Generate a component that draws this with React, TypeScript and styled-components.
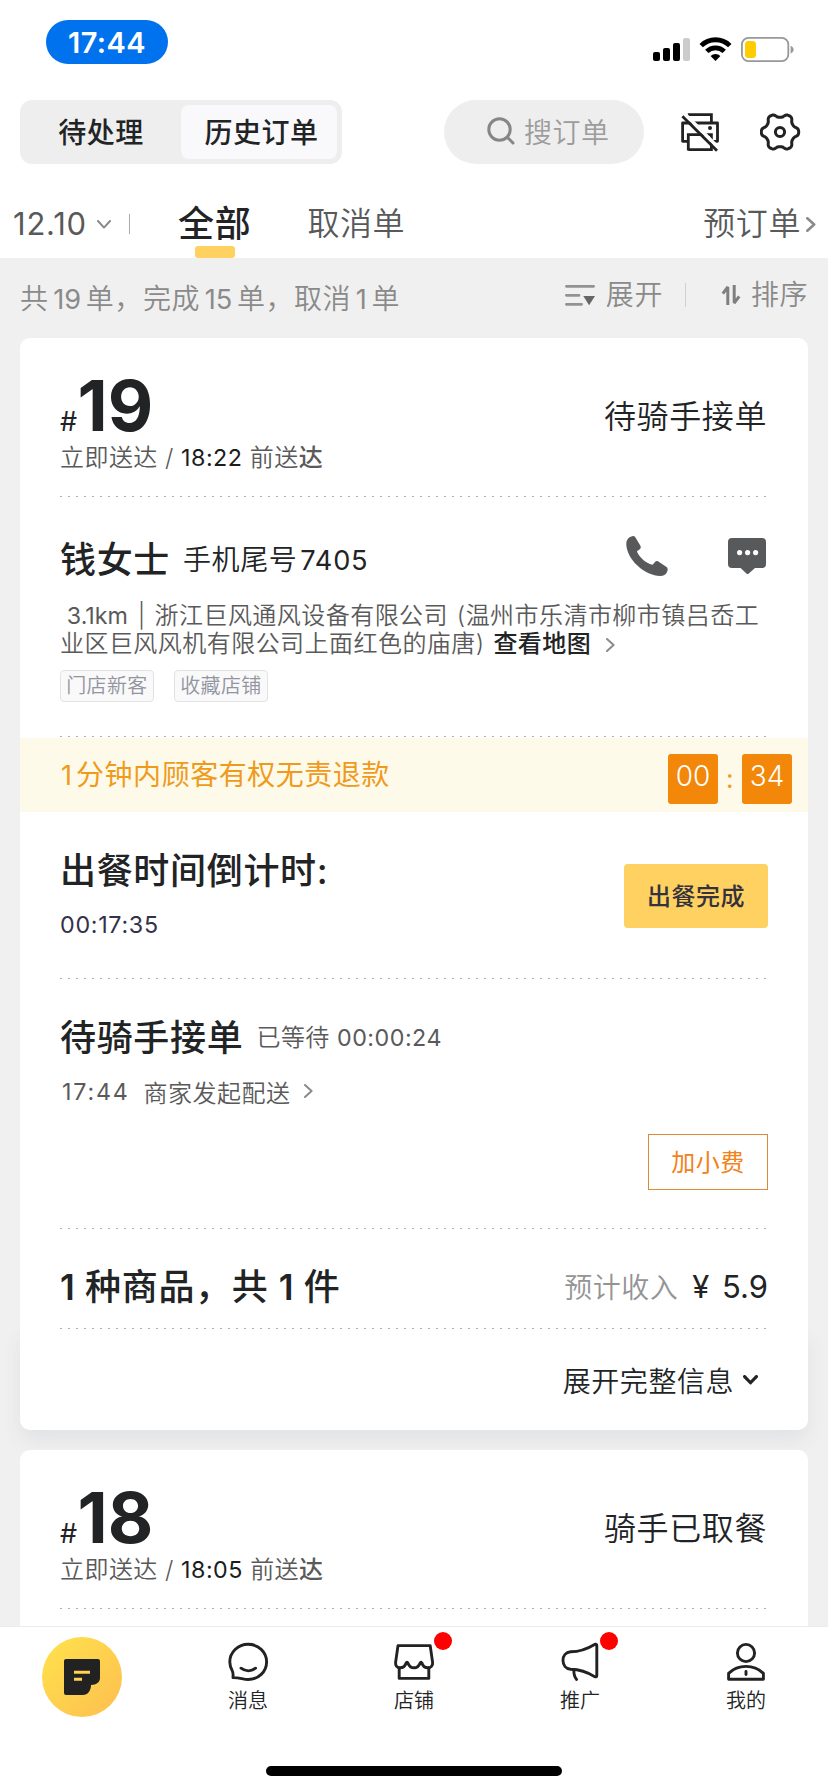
import React from "react";
import styled, { createGlobalStyle } from "styled-components";

const GlobalStyle = createGlobalStyle`
  * { box-sizing: border-box; letter-spacing: 0.019em; }
  html, body { margin: 0; padding: 0; background: #fff; }
  body {
    font-family: Inter, "Noto Sans CJK SC", sans-serif;
    color: #222325;
    white-space: nowrap;
  }
  svg { display: block; flex: none; }
`;

const Screen = styled.div`
  width: 828px;
  height: 1792px;
  display: flex;
  flex-direction: column;
  overflow: hidden;
  background: #fff;
`;

/* Latin digits set a touch smaller than the surrounding CJK text */
const Num = styled.span<{ $track?: number; $gap?: number; $weight?: number }>`
  font-size: 0.97em;
  font-weight: ${(p) => p.$weight ?? 400};
  letter-spacing: ${(p) => p.$track ?? 0}px;
  margin: 0 ${(p) => p.$gap ?? 0}px;
`;

/* ---------- status bar ---------- */
const StatusBar = styled.div`
  height: 100px;
  flex: none;
  display: flex;
  justify-content: space-between;
  padding: 20px 33px 0 46px;
`;
const TimePill = styled.div`
  width: 122px;
  height: 44px;
  border-radius: 22px;
  background: #0072ee;
  color: #fff;
  font-size: 29px;
  font-weight: 560;
  line-height: 45px;
  text-align: center;
  letter-spacing: 0.4px;
`;
const StatusIcons = styled.div`
  display: flex;
  gap: 9px;
  padding-top: 16px;
`;

/* ---------- top bar ---------- */
const TopBar = styled.div`
  height: 64px;
  flex: none;
  display: flex;
  align-items: center;
  padding: 0 24px 0 20px;
`;
const Segmented = styled.div`
  width: 322px;
  height: 64px;
  padding: 5px;
  display: flex;
  border-radius: 12px;
  background: #eee;
`;
const Segment = styled.div<{ $active?: boolean }>`
  flex: ${(p) => (p.$active ? "0 0 156px" : "1")};
  display: flex;
  align-items: center;
  justify-content: center;
  padding: ${(p) => (p.$active ? "0 0 2px 5px" : "0 4px 2px 0")};
  border-radius: 8px;
  background: ${(p) => (p.$active ? "#f9f9fb" : "transparent")};
  font-size: 28px;
  font-weight: 500;
`;
const SearchBox = styled.div`
  width: 200px;
  height: 64px;
  margin: 0 36px 0 102px;
  padding: 0 0 2px 43px;
  display: flex;
  align-items: center;
  gap: 9px;
  border-radius: 32px;
  background: #eee;
  color: #9c9c9c;
  font-size: 28px;
  font-weight: 350;
`;
const TopActions = styled.div`
  display: flex;
  gap: 40px;
`;

/* ---------- filter tabs ---------- */
const FilterBar = styled.div`
  height: 94px;
  flex: none;
  display: flex;
  padding: 30px 12px 0 12px;
  line-height: 60px;
  color: #595959;
`;
const DatePicker = styled.div`
  width: 118px;
  height: 60px;
  display: flex;
  align-items: center;
  justify-content: space-between;
  font-size: 31px;
  padding: 0 19px 0 1px;
  letter-spacing: 0.8px;
`;
const FilterRule = styled.i`
  width: 1px;
  height: 20px;
  margin: 20px 0 0 -1px;
  background: #aaa;
`;
const FilterTab = styled.div<{ $active?: boolean; $left: number }>`
  margin-left: ${(p) => p.$left}px;
  height: 64px;
  display: flex;
  flex-direction: column;
  align-items: center;
  font-size: ${(p) => (p.$active ? 36 : 32)}px;
  font-weight: ${(p) => (p.$active ? 500 : 350)};
  color: ${(p) => (p.$active ? "#222325" : "#595959")};
`;
const TabMarker = styled.i`
  width: 40px;
  height: 12px;
  flex: none;
  margin-top: -8px;
  border-radius: 3px;
  background: #ffd161;
`;
const Preorder = styled.div`
  margin-left: auto;
  height: 60px;
  display: flex;
  align-items: center;
  gap: 5px;
  font-size: 32px;
  font-weight: 350;
`;

/* ---------- order list ---------- */
const OrderList = styled.main`
  flex: 1;
  min-height: 0;
  overflow: hidden;
  display: flex;
  flex-direction: column;
  background: #f0f0f0;
`;
const Summary = styled.div`
  height: 80px;
  flex: none;
  display: flex;
  padding: 0 20px;
  font-size: 28px;
  font-weight: 350;
  color: #8a8a8a;
  line-height: 82px;
`;
const SummaryTools = styled.div`
  margin-left: auto;
  height: 74px;
  display: flex;
  align-items: center;
  line-height: 74px;
`;
const ToolLabel = styled.span`
  margin-left: 10px;
`;
const ToolRule = styled.i`
  width: 1px;
  height: 24px;
  background: #d0d0d0;
  margin: 0 35px 0 22px;
`;

const Card = styled.article`
  width: 788px;
  min-height: 300px;
  margin: 0 20px 20px;
  flex: none;
  border-radius: 10px;
  background: #fff;
`;
const Divider = styled.div`
  height: 1px;
  margin: 0 40px;
  background: repeating-linear-gradient(90deg, #adadad 0 2px, transparent 2px 8px);
`;
const CardHead = styled.header`
  height: 158px;
  padding: 32px 41px 0 40px;
  display: flex;
  justify-content: space-between;
`;
const OrderNo = styled.div`
  height: 74px;
  display: flex;
  align-items: baseline;
  line-height: 72px;
  font-size: 70px;
  font-weight: 700;
  letter-spacing: 0;
`;
const Hash = styled.span`
  font-size: 27px;
  font-weight: 400;
  letter-spacing: 0.4px;
`;
const Deliver = styled.div`
  font-size: 24px;
  font-weight: 350;
  color: #5a5a5a;
  line-height: 28px;
  b { font-weight: 400; color: #1c1c1e; }
  em { font-style: normal; font-weight: 500; }
`;
const OrderStatus = styled.div`
  padding-top: 17px;
  line-height: 60px;
  font-size: 32px;
  font-weight: 350;
`;

const Customer = styled.section`
  height: 239px;
  padding: 30px 40px 0;
`;
const CustomerRow = styled.div`
  height: 60px;
  display: flex;
  align-items: center;
`;
const Name = styled.h2`
  margin: 0;
  font-size: 36px;
  font-weight: 500;
`;
const PhoneTail = styled.span`
  margin-left: 13px;
  padding-top: 1px;
  font-size: 28px;
  font-weight: 350;
  flex: 1;
`;
const ContactIcons = styled.div`
  display: flex;
  align-items: center;
  gap: 58px;
  margin-right: 1px;
  padding-bottom: 2px;
`;
const Address = styled.p`
  margin: 15px 0 12px;
  font-size: 24px;
  font-weight: 350;
  line-height: 28px;
  color: #5a5a5a;
  white-space: pre;
  word-spacing: 1.6px;
  b { font-weight: 500; color: #222325; }
  svg { display: inline-block; margin-left: 15px; }
`;
const Distance = styled(Num)`
  margin: 0 1px 0 -2px;
`;
const Tags = styled.div`
  display: flex;
  gap: 20px;
`;
const Tag = styled.span`
  width: 94px;
  height: 32px;
  border: 1px solid #e2e2e4;
  border-radius: 4px;
  background: #f9f9fa;
  color: #9294a0;
  font-size: 20px;
  font-weight: 350;
  line-height: 30px;
  text-align: center;
`;

const RefundStrip = styled.section`
  height: 74px;
  margin-top: 1px;
  padding: 0 16px 0 40px;
  display: flex;
  align-items: center;
  justify-content: space-between;
  background: #fdfaea;
  color: #f09a1c;
  font-size: 28px;
  line-height: 76px;
`;
const Timer = styled.div`
  display: flex;
  align-items: center;
  padding-top: 8px;
`;
const TimerBox = styled.span`
  width: 50px;
  height: 50px;
  border-radius: 3px;
  background: #f28709;
  color: #fff;
  font-size: 28px;
  font-weight: 350;
  line-height: 44px;
  text-align: center;
  letter-spacing: 0;
`;
const TimerColon = styled.span`
  width: 24px;
  text-align: center;
  font-size: 26px;
  line-height: 50px;
`;

const Prep = styled.section`
  height: 166px;
  padding: 0 40px;
  display: flex;
  justify-content: space-between;
`;
const Title = styled.h3`
  margin: 0;
  font-size: 36px;
  font-weight: 500;
  line-height: 60px;
`;
const PrepInfo = styled.div`
  padding-top: 29px;
`;
const Countdown = styled.div`
  font-size: 24px;
  line-height: 48px;
  color: #34324a;
`;
const DoneButton = styled.button`
  width: 144px;
  height: 64px;
  margin-top: 52px;
  padding: 0 0 3px;
  border: 0;
  border-radius: 4px;
  background: #ffd161;
  color: #34323c;
  font: inherit;
  font-size: 24px;
  font-weight: 500;
`;

const Rider = styled.section`
  height: 249px;
  padding: 29px 40px 0;
  display: flex;
  flex-direction: column;
`;
const RiderRow = styled.div`
  display: flex;
  align-items: center;
  line-height: 60px;
`;
const Waited = styled.span`
  margin-left: 13px;
  font-size: 24px;
  font-weight: 350;
  color: #5a5a5a;
`;
const RiderLog = styled.div`
  height: 46px;
  display: flex;
  align-items: center;
  gap: 14px;
  padding-left: 2px;
  font-size: 24px;
  font-weight: 350;
  color: #5a5a5a;
`;
const TipButton = styled.button`
  align-self: flex-end;
  width: 120px;
  height: 56px;
  margin-top: 20px;
  padding: 0 0 3px;
  border: 1px solid #dc8a33;
  background: #fff;
  color: #f2821a;
  font: inherit;
  font-size: 24px;
`;

const Goods = styled.section`
  height: 99px;
  padding: 18px 40px 0;
  display: flex;
  justify-content: space-between;
  line-height: 80px;
  ${Title} { line-height: 80px; }
`;
const Income = styled.div`
  font-size: 28px;
  font-weight: 350;
  color: #949494;
  b {
    margin-left: 14px;
    font-size: 31px;
    font-weight: 400;
    letter-spacing: 0;
    color: #222325;
    word-spacing: 4px;
  }
`;
const Expand = styled.footer`
  height: 101px;
  padding: 0 50px 0 0;
  display: flex;
  align-items: center;
  justify-content: flex-end;
  gap: 9px;
  border-radius: 0 0 10px 10px;
  font-size: 28px;
  font-weight: 350;
  box-shadow: 0 10px 20px rgba(70, 72, 100, 0.08);
  clip-path: inset(0 -20px -20px -20px);
`;

/* ---------- bottom navigation ---------- */
const NavBar = styled.nav`
  height: 166px;
  flex: none;
  border-top: 1px solid #ebebeb;
  background: #fff;
  display: flex;
  flex-direction: column;
  justify-content: space-between;
  align-items: center;
  padding-bottom: 16px;
`;
const NavItems = styled.div`
  width: 830px;
  display: flex;
`;
const NavItem = styled.div`
  position: relative;
  flex: 1;
  display: flex;
  flex-direction: column;
  align-items: center;
  padding-top: 13px;
  font-size: 20px;
  font-weight: 350;
  line-height: 34px;
  letter-spacing: 0;
`;
const NavHome = styled(NavItem)`
  padding-top: 10px;
`;
const HomeDisc = styled.div`
  width: 80px;
  height: 80px;
  border-radius: 40px;
  display: flex;
  align-items: center;
  justify-content: center;
  background: linear-gradient(135deg, #ffdf4d 10%, #fdc24f 90%);
`;
const NavDot = styled.i`
  position: absolute;
  top: 5px;
  left: calc(50% + 20px);
  width: 18px;
  height: 18px;
  border-radius: 9px;
  background: #fe0000;
`;
const HomeIndicator = styled.div`
  width: 296px;
  height: 10px;
  border-radius: 5px;
  background: #000;
`;

/* ---------- icons ---------- */
const Chevron = ({ dir = "right", w, h, stroke = 2.4, color = "#8a8a8e" }: {
  dir?: "right" | "down"; w: number; h: number; stroke?: number; color?: string;
}) => {
  const m = stroke / 2;
  const d = dir === "right"
    ? `M${m} ${m}L${w - m * 1.4} ${h / 2}L${m} ${h - m}`
    : `M${m} ${m}L${w / 2} ${h - m * 1.4}L${w - m} ${m}`;
  return (
    <svg width={w} height={h} fill="none" stroke={color} strokeWidth={stroke} strokeLinecap="round" strokeLinejoin="round">
      <path d={d} />
    </svg>
  );
};

const SignalIcon = () => (
  <svg width="37" height="26">
    <rect x="0" y="16" width="7" height="9" rx="2" />
    <rect x="10" y="12" width="7" height="13" rx="2" />
    <rect x="20" y="7" width="7" height="18" rx="2" />
    <rect x="30" y="2" width="7" height="23" rx="2" fill="#ccc" />
  </svg>
);

const WifiIcon = () => (
  <svg width="33" height="26" fill="none" stroke="#000" strokeWidth="4.8">
    <path d="M2.2 9.6A20.4 20.4 0 0 1 30.8 9.6" />
    <path d="M7.8 15.4A12.3 12.3 0 0 1 25.2 15.4" />
    <path d="M16.5 25L11.6 20.1A7 7 0 0 1 21.4 20.1Z" fill="#000" stroke="none" />
  </svg>
);

const BatteryIcon = () => (
  <svg width="54" height="26">
    <rect x="0.9" y="1.9" width="46.4" height="23.2" rx="6.5" fill="none" stroke="#98989a" strokeWidth="1.8" />
    <rect x="4" y="5" width="11" height="17" rx="3.5" fill="#ffcc00" />
    <path d="M49.6 9.8C53.6 11.4 53.6 16 49.6 17.4Z" fill="#98989a" />
  </svg>
);

const SearchIcon = () => (
  <svg width="28" height="28" fill="none" stroke="#868686" strokeWidth="3" strokeLinecap="round">
    <circle cx="12.5" cy="12.5" r="10.7" />
    <path d="M20.5 20.5L26 26" />
  </svg>
);

const PrinterOffIcon = () => (
  <svg width="40" height="40" fill="none" stroke="#222" strokeWidth="2.8">
    <path d="M8.3 29.3H2.6V11H37.5V29.3H32" strokeLinejoin="round" />
    <path d="M7.8 2.6H31.4V11" />
    <path d="M8.3 38.6V22.6H31.4V37.6H8.3" />
    <circle cx="30" cy="16" r="2" fill="#222" stroke="none" />
    <path d="M4.6 1.8L39 36.2" stroke="#fff" strokeWidth="3.6" />
    <path d="M2.4 4.2L37 38.8" />
  </svg>
);

/* six-toothed cog outline sampled from a flattened cosine */
const cogPath = (() => {
  const pts: string[] = [];
  for (let a = 0; a < 360; a += 3) {
    const t = (a * Math.PI) / 180;
    const r = 16.7 + (2 * Math.tanh(1.5 * Math.cos(6 * t))) / Math.tanh(1.5);
    pts.push(`${(20 + r * Math.cos(t)).toFixed(2)} ${(20 + r * Math.sin(t)).toFixed(2)}`);
  }
  return `M${pts.join("L")}Z`;
})();
const CogIcon = () => (
  <svg width="42" height="40" fill="none" stroke="#222" strokeWidth="3" strokeLinejoin="round">
    <path d={cogPath} />
    <circle cx="20" cy="20" r="4.6" />
  </svg>
);

const ExpandIcon = () => (
  <svg width="32" height="24" stroke="#929292" strokeWidth="2.8" strokeLinecap="round">
    <path d="M2.4 3.3H29.6M2.4 12.3H15M2.4 21.3H17.6" />
    <path d="M19.3 13H31L25.1 22.3Z" fill="#666" stroke="none" />
  </svg>
);

const SortIcon = () => (
  <svg width="20" height="22" fill="none" stroke="#7f7f7f" strokeWidth="3">
    <path d="M6.8 21V3L1.8 9.6" strokeLinejoin="bevel" />
    <path d="M13.2 1V19L18.2 12.4" strokeLinejoin="bevel" />
  </svg>
);

const PhoneIcon = () => (
  <svg width="44" height="44" fill="#58595b">
    <path d="M8 2C9.2 1.8 10 2.6 10.6 3.7L15.4 11.8C16.1 13.2 15.8 14.4 14.8 15.2L11.9 17.3C12.6 19.6 15 23.2 18.6 26.2C21.8 28.9 25 30.3 27.6 30.8L30 28C30.9 27 32.1 26.8 33.3 27.6L41.2 32.8C42.6 33.8 43 35.2 42.4 37C41.4 40.4 39 42 35 42C28 41.8 19.4 38.4 12.4 31.6C5.6 25 1.6 17.4 1.3 10.4C1.2 6 3.6 2.8 8 2Z" />
  </svg>
);

const BubbleIcon = () => (
  <svg width="40" height="40">
    <path d="M5 2H35A4 4 0 0 1 39 6V28A4 4 0 0 1 35 32H28L21.8 37.4Q20.6 38.6 19.4 37.4L13.6 32H5A4 4 0 0 1 1 28V6A4 4 0 0 1 5 2Z" fill="#58595b" />
    <circle cx="12.6" cy="16.6" r="2.6" fill="#fff" />
    <circle cx="20.6" cy="16.6" r="2.6" fill="#fff" />
    <circle cx="28.6" cy="16.6" r="2.6" fill="#fff" />
  </svg>
);

const NoteIcon = () => (
  <svg width="36" height="36">
    <path d="M2 0H34A2 2 0 0 1 36 2V19C36 23 32.5 26 27 26C27 32 23.5 36 19 36H2A2 2 0 0 1 0 34V2A2 2 0 0 1 2 0Z" fill="#222" />
    <path d="M10 13.3H26M10 20.3H18" stroke="#ffd255" strokeWidth="3" />
  </svg>
);

const NavIcon = styled.svg.attrs({ width: 44, height: 44, fill: "none", stroke: "#222", strokeWidth: 2.9 })`
  stroke-linejoin: round;
  stroke-linecap: round;
`;

const MessageIcon = () => (
  <NavIcon>
    <path d="M7 37.6C7.3 34.4 7.2 32.4 6.2 30.6C4.7 27.8 3.8 25.2 3.8 22A18.4 17.6 0 1 1 22.2 39.5C17 39.5 13.6 37.4 7 37.6Z" />
    <path d="M15 28.2C19.4 31.6 25.2 31.6 29.6 28.2" />
  </NavIcon>
);
const ShopIcon = () => (
  <NavIcon>
    <path d="M6 5.6H38.2L40.6 22.4C41 25.8 38.8 27.8 36 27.8C32.6 27.8 31 26.4 30 23.2Q29 21.4 28 23.2C26.8 26.4 25 27.8 22 27.8C19 27.8 17.2 26.4 16 23.2Q15 21.4 14 23.2C13 26.4 11.4 27.8 8 27.8C5.2 27.8 3.2 25.8 3.6 22.4Z" />
    <path d="M7.2 28V38.4H36.8V28" />
  </NavIcon>
);
const PromoIcon = () => (
  <NavIcon>
    <path d="M12.6 11.8C22 11.6 30 8.4 36.6 4.4Q38.8 3.6 38.8 5.6V35.4Q38.8 37.6 36.6 36.6C30 32.4 22 29.4 12.6 29.2C8 28.8 5 25.2 5 20.5C5 15.8 8 12.2 12.6 11.8Z" />
    <path d="M15.8 30C15.8 34 16.4 37 18.6 39.4" />
  </NavIcon>
);
const MineIcon = () => (
  <NavIcon>
    <circle cx="22" cy="13" r="8.6" />
    <path d="M4.6 39.2V33.4C9.6 28.4 15.4 26.4 22 26.4C28.6 26.4 34.4 28.4 39.4 33.4V39.2Z" />
    <path d="M22 31.4V34.6" />
  </NavIcon>
);

/* ---------- composition ---------- */
const OrderHead = ({ no, time, status }: { no: string; time: string; status: string }) => (
  <>
    <CardHead>
      <div>
        <OrderNo><Hash>#</Hash>{no}</OrderNo>
        <Deliver>立即送达 / <b><Num $track={0.5}>{time}</Num></b> 前送<em>达</em></Deliver>
      </div>
      <OrderStatus>{status}</OrderStatus>
    </CardHead>
    <Divider />
  </>
);

const navItems = [
  { label: "消息", Icon: MessageIcon, dot: false },
  { label: "店铺", Icon: ShopIcon, dot: true },
  { label: "推广", Icon: PromoIcon, dot: true },
  { label: "我的", Icon: MineIcon, dot: false },
];

export default function App() {
  return (
    <Screen>
      <GlobalStyle />
      <StatusBar>
        <TimePill>17:44</TimePill>
        <StatusIcons>
          <SignalIcon />
          <WifiIcon />
          <BatteryIcon />
        </StatusIcons>
      </StatusBar>

      <TopBar>
        <Segmented>
          <Segment>待处理</Segment>
          <Segment $active>历史订单</Segment>
        </Segmented>
        <SearchBox><SearchIcon />搜订单</SearchBox>
        <TopActions>
          <PrinterOffIcon />
          <CogIcon />
        </TopActions>
      </TopBar>

      <FilterBar>
        <DatePicker>12.10<Chevron dir="down" w={14} h={9} stroke={2} /></DatePicker>
        <FilterRule />
        <FilterTab $active $left={48}>全部<TabMarker /></FilterTab>
        <FilterTab $left={56}>取消单</FilterTab>
        <Preorder>预订单<Chevron w={10} h={15} stroke={2.6} /></Preorder>
      </FilterBar>

      <OrderList>
        <Summary>
          <span>共<Num $gap={4.7}>19</Num>单，完成<Num $gap={4.7}>15</Num>单，取消<Num $gap={4.7}>1</Num>单</span>
          <SummaryTools>
            <ExpandIcon />
            <ToolLabel>展开</ToolLabel>
            <ToolRule />
            <SortIcon />
            <ToolLabel>排序</ToolLabel>
          </SummaryTools>
        </Summary>

        <Card>
          <OrderHead no="19" time="18:22" status="待骑手接单" />
          <Customer>
            <CustomerRow>
              <Name>钱女士</Name>
              <PhoneTail>手机尾号<Num $gap={3} $track={0.8}>7405</Num></PhoneTail>
              <ContactIcons>
                <PhoneIcon />
                <BubbleIcon />
              </ContactIcons>
            </CustomerRow>
            <Address>
              {" "}<Distance>3.1km</Distance> | 浙江巨风通风设备有限公司 (温州市乐清市柳市镇吕岙工{"\n"}
              业区巨风风机有限公司上面红色的庙唐) <b>查看地图</b><Chevron w={9} h={14} stroke={2} />
            </Address>
            <Tags>
              <Tag>门店新客</Tag>
              <Tag>收藏店铺</Tag>
            </Tags>
          </Customer>
          <Divider />
          <RefundStrip>
            <span><Num $gap={1} $track={3}>1</Num>分钟内顾客有权无责退款</span>
            <Timer>
              <TimerBox>00</TimerBox>
              <TimerColon>:</TimerColon>
              <TimerBox>34</TimerBox>
            </Timer>
          </RefundStrip>
          <Prep>
            <PrepInfo>
              <Title>出餐时间倒计时:</Title>
              <Countdown><Num $track={0.7}>00:17:35</Num></Countdown>
            </PrepInfo>
            <DoneButton>出餐完成</DoneButton>
          </Prep>
          <Divider />
          <Rider>
            <RiderRow>
              <Title>待骑手接单</Title>
              <Waited>已等待 <Num $track={0.5}>00:00:24</Num></Waited>
            </RiderRow>
            <RiderLog>
              <Num $track={1.8}>17:44</Num>
              <span>商家发起配送</span>
              <Chevron w={9} h={14} stroke={2} />
            </RiderLog>
            <TipButton>加小费</TipButton>
          </Rider>
          <Divider />
          <Goods>
            <Title><Num $weight={600}>1</Num> 种商品，共 <Num $weight={600}>1</Num> 件</Title>
            <Income>预计收入<b>¥ 5.9</b></Income>
          </Goods>
          <Divider />
          <Expand>展开完整信息<Chevron dir="down" w={15} h={10} stroke={3.2} color="#222325" /></Expand>
        </Card>

        <Card>
          <OrderHead no="18" time="18:05" status="骑手已取餐" />
        </Card>
      </OrderList>

      <NavBar>
        <NavItems>
          <NavHome><HomeDisc><NoteIcon /></HomeDisc></NavHome>
          {navItems.map(({ label, Icon, dot }) => (
            <NavItem key={label}>
              <Icon />
              {label}
              {dot && <NavDot />}
            </NavItem>
          ))}
        </NavItems>
        <HomeIndicator />
      </NavBar>
    </Screen>
  );
}
